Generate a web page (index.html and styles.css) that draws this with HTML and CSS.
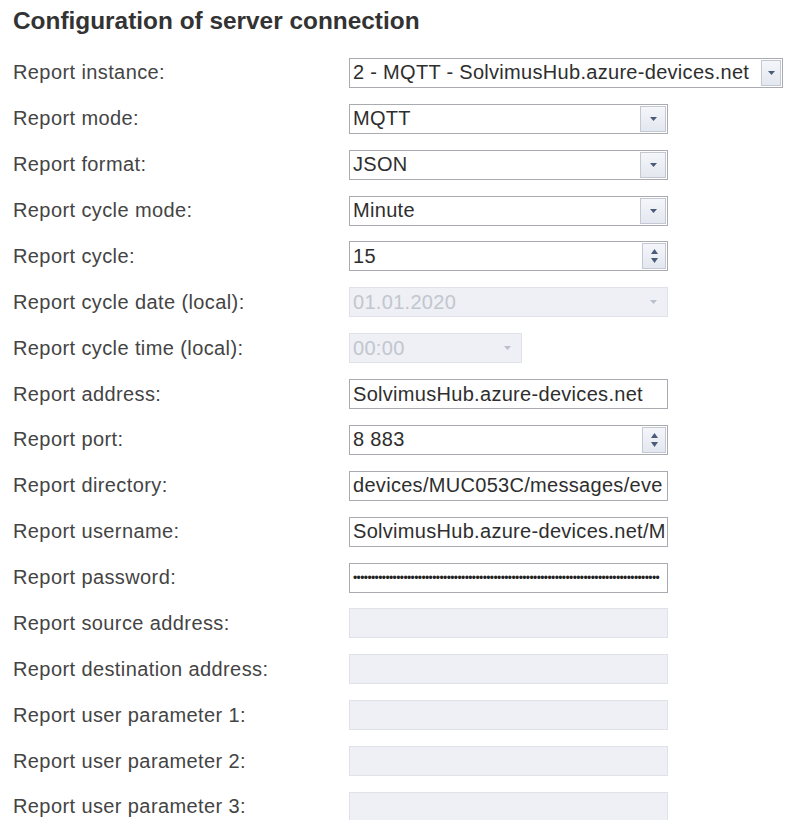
FILE: index.html
```html
<!DOCTYPE html>
<html lang="en">
<head>
<meta charset="utf-8">
<title>Configuration of server connection</title>
<link rel="stylesheet" href="styles.css">
</head>
<body>
<div class="page">
  <h1 class="title">Configuration of server connection</h1>
  <div class="form">
    <div class="row">
      <span class="lbl">Report instance:</span>
      <div class="field w-full">
        <span class="val">2 - MQTT - SolvimusHub.azure-devices.net</span>
        <span class="btn narrow"><svg width="9" height="6" viewBox="0 0 9 6"><path d="M1 1h7L4.5 5z" fill="#4a5a78"/></svg></span>
      </div>
    </div>
    <div class="row">
      <span class="lbl">Report mode:</span>
      <div class="field w-std">
        <span class="val">MQTT</span>
        <span class="btn"><svg width="9" height="6" viewBox="0 0 9 6"><path d="M1 1h7L4.5 5z" fill="#4a5a78"/></svg></span>
      </div>
    </div>
    <div class="row">
      <span class="lbl">Report format:</span>
      <div class="field w-std">
        <span class="val">JSON</span>
        <span class="btn"><svg width="9" height="6" viewBox="0 0 9 6"><path d="M1 1h7L4.5 5z" fill="#4a5a78"/></svg></span>
      </div>
    </div>
    <div class="row">
      <span class="lbl">Report cycle mode:</span>
      <div class="field w-std">
        <span class="val">Minute</span>
        <span class="btn"><svg width="9" height="6" viewBox="0 0 9 6"><path d="M1 1h7L4.5 5z" fill="#4a5a78"/></svg></span>
      </div>
    </div>
    <div class="row">
      <span class="lbl">Report cycle:</span>
      <div class="field w-std">
        <span class="val">15</span>
        <span class="btn spin"><svg width="9" height="18" viewBox="0 0 9 18"><path d="M1 7h7L4.5 2z" fill="#4a5a78"/><path d="M1 11h7L4.5 16z" fill="#4a5a78"/></svg></span>
      </div>
    </div>
    <div class="row">
      <span class="lbl">Report cycle date (local):</span>
      <div class="field w-std off">
        <span class="val">01.01.2020</span>
        <span class="btn"><svg width="9" height="6" viewBox="0 0 9 6"><path d="M1 1h7L4.5 5z" fill="#b9bfcc"/></svg></span>
      </div>
    </div>
    <div class="row">
      <span class="lbl">Report cycle time (local):</span>
      <div class="field w-short off">
        <span class="val">00:00</span>
        <span class="btn"><svg width="9" height="6" viewBox="0 0 9 6"><path d="M1 1h7L4.5 5z" fill="#b9bfcc"/></svg></span>
      </div>
    </div>
    <div class="row">
      <span class="lbl">Report address:</span>
      <div class="field w-std">
        <span class="val">SolvimusHub.azure-devices.net</span>
      </div>
    </div>
    <div class="row">
      <span class="lbl">Report port:</span>
      <div class="field w-std">
        <span class="val">8 883</span>
        <span class="btn spin"><svg width="9" height="18" viewBox="0 0 9 18"><path d="M1 7h7L4.5 2z" fill="#4a5a78"/><path d="M1 11h7L4.5 16z" fill="#4a5a78"/></svg></span>
      </div>
    </div>
    <div class="row">
      <span class="lbl">Report directory:</span>
      <div class="field w-std">
        <span class="val">devices/MUC053C/messages/eve</span>
      </div>
    </div>
    <div class="row">
      <span class="lbl">Report username:</span>
      <div class="field w-std">
        <span class="val">SolvimusHub.azure-devices.net/M</span>
      </div>
    </div>
    <div class="row">
      <span class="lbl">Report password:</span>
      <div class="field w-std">
        <span class="val dots">•••••••••••••••••••••••••••••••••••••••••••••••••••••••••••••••••••••••••••••••••••••</span>
      </div>
    </div>
    <div class="row">
      <span class="lbl">Report source address:</span>
      <div class="field w-std off"></div>
    </div>
    <div class="row">
      <span class="lbl">Report destination address:</span>
      <div class="field w-std off"></div>
    </div>
    <div class="row">
      <span class="lbl">Report user parameter 1:</span>
      <div class="field w-std off"></div>
    </div>
    <div class="row">
      <span class="lbl">Report user parameter 2:</span>
      <div class="field w-std off"></div>
    </div>
    <div class="row">
      <span class="lbl">Report user parameter 3:</span>
      <div class="field w-std off"></div>
    </div>
  </div>
</div>
</body>
</html>
```

FILE: styles.css
```css
html, body {
  margin: 0;
  padding: 0;
  background: #ffffff;
}

.page {
  padding: 7px 0 0 13px;
  font-family: "Liberation Sans", Arial, sans-serif;
  color: #3c3c3c;
}

.title {
  margin: 0 0 15px 0;
  font-size: 24.4px;
  line-height: 28px;
  font-weight: bold;
  color: #333333;
}

.form {
  display: flex;
  flex-direction: column;
}

.row {
  display: flex;
  align-items: center;
  height: 45.875px;
}

.lbl {
  flex: 0 0 336px;
  font-size: 20px;
  letter-spacing: 0.4px;
  color: #444444;
  white-space: nowrap;
}

.field {
  box-sizing: border-box;
  height: 30px;
  display: flex;
  align-items: center;
  border: 1px solid #a9abb0;
  background: #ffffff;
  overflow: hidden;
}

.w-full { width: 434px; }
.w-std { width: 319px; }
.w-short { width: 173px; }

.val {
  flex: 1 1 auto;
  min-width: 0;
  padding-left: 3px;
  font-size: 20px;
  letter-spacing: 0.3px;
  color: #2e2e2e;
  white-space: nowrap;
  overflow: hidden;
}

.val.dots {
  font-size: 12px;
  letter-spacing: -0.6px;
  color: #222;
}

.btn {
  flex: 0 0 24px;
  align-self: stretch;
  display: flex;
  align-items: center;
  justify-content: center;
  margin: 1px;
  border: 1px solid #c3c8d3;
  background: linear-gradient(#f4f6fa, #e3e7ef);
}

.btn.narrow {
  flex-basis: 18px;
}

.btn.spin {
  flex-basis: 22px;
}

.field.off {
  background: #eef0f5;
  border-color: #dfe2e9;
}

.field.off .val {
  color: #c2c6cf;
}

.field.off .btn {
  border-color: transparent;
  background: transparent;
}
```
